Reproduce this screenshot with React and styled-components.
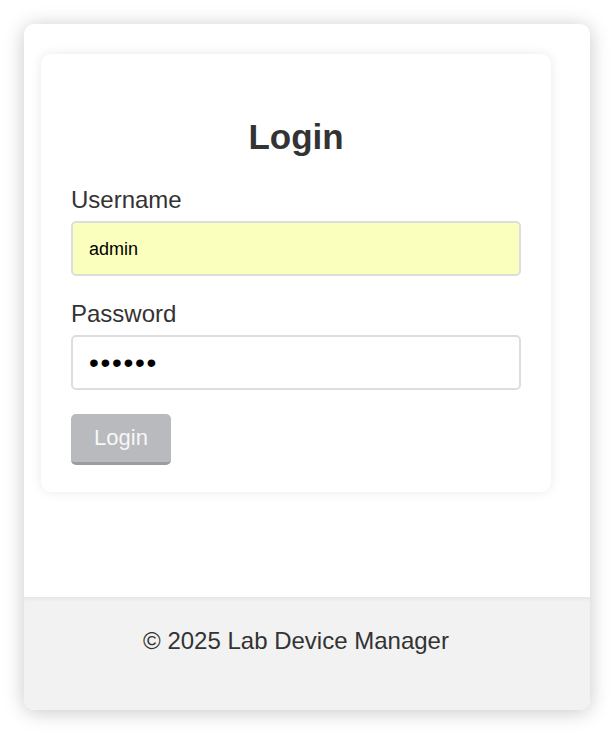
import React from "react";
import styled, { createGlobalStyle } from "styled-components";

const GlobalStyle = createGlobalStyle`
  html, body {
    margin: 0;
    background: #ffffff;
  }
  body {
    font-family: "Liberation Sans", Arial, Helvetica, sans-serif;
    color: #333333;
  }
  * {
    box-sizing: border-box;
  }
`;

const Page = styled.div`
  padding: 24px;
`;

const Shell = styled.div`
  background: #ffffff;
  border-radius: 10px;
  box-shadow: 0 2px 20px rgba(0, 0, 0, 0.22);
  overflow: hidden;
`;

const Main = styled.main`
  padding: 30px 39px 105px 17px;
`;

const Card = styled.form`
  background: #ffffff;
  border-radius: 10px;
  box-shadow: 0 0 12px rgba(0, 0, 0, 0.09);
  padding: 30px 30px 27px;
`;

const Title = styled.h2`
  margin: 33px 0 30px;
  font-size: 35px;
  line-height: 40px;
  font-weight: bold;
  text-align: center;
  color: #333333;
`;

const Field = styled.div`
  display: flex;
  flex-direction: column;
  margin-bottom: ${(p) => p.$gap}px;
`;

const Label = styled.label`
  font-size: 24px;
  line-height: 26px;
  color: #333333;
  margin-bottom: 8px;
`;

const Input = styled.input`
  height: 55px;
  width: 100%;
  border: 2px solid #dddddd;
  border-radius: 5px;
  padding: 1px 16px 0;
  font-family: "Liberation Sans", Arial, sans-serif;
  font-size: ${(p) => (p.type === "password" ? 28 : 18)}px;
  letter-spacing: ${(p) => (p.type === "password" ? 1.7 : 0)}px;
  color: #000000;
  background: ${(p) => (p.$filled ? "#faffbd" : "#ffffff")};
  outline: none;
`;

const Button = styled.button`
  width: 100px;
  height: 51px;
  border: none;
  border-bottom: 3px solid #9b9ca0;
  border-radius: 5px;
  background: #b8babe;
  color: #f7f7f7;
  font-family: "Liberation Sans", Arial, sans-serif;
  font-size: 22px;
  padding: 0;
`;

const Footer = styled.footer`
  background: #f2f2f2;
  box-shadow: inset 0 4px 5px -3px rgba(0, 0, 0, 0.08);
  padding: 30px 22px 55px 0;
  text-align: center;
  font-size: 24px;
  line-height: 28px;
  color: #333333;
`;

export default function App() {
  return (
    <>
      <GlobalStyle />
      <Page>
        <Shell>
          <Main>
            <Card onSubmit={(e) => e.preventDefault()}>
              <Title>Login</Title>
              <Field $gap={25}>
                <Label htmlFor="username">Username</Label>
                <Input id="username" type="text" defaultValue="admin" $filled />
              </Field>
              <Field $gap={24}>
                <Label htmlFor="password">Password</Label>
                <Input id="password" type="password" defaultValue="secret" />
              </Field>
              <Button type="submit">Login</Button>
            </Card>
          </Main>
          <Footer>© 2025 Lab Device Manager</Footer>
        </Shell>
      </Page>
    </>
  );
}
